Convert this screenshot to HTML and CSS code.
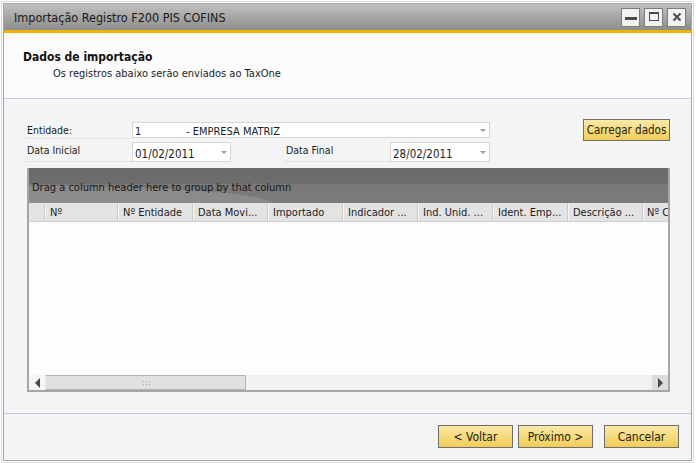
FILE: index.html
```html
<!DOCTYPE html>
<html>
    <head>
        <meta http-equiv='Content-Type' content='text/html; charset=UTF-8'>
        <title>Importação Registro F200 PIS COFINS</title>
        <link rel="stylesheet" href="styles.css">
    </head>
    <body>
        <div class='window'>
            <div class='titlebar'>
                <span class='title'>Importação Registro F200 PIS COFINS</span>
                <div class='winbtns'>
                    <span class='winbtn'><svg width='16' height='16' viewBox='0 0 16 16'><rect x='2' y='8' width='12' height='3' fill='#4a4a4a'/></svg></span>
                    <span class='winbtn'><svg width='16' height='16' viewBox='0 0 16 16'><rect x='3.5' y='3.5' width='9' height='8' fill='none' stroke='#4a4a4a' stroke-width='1'/><rect x='3' y='3' width='10' height='2' fill='#4a4a4a'/></svg></span>
                    <span class='winbtn'><svg width='16' height='16' viewBox='0 0 16 16'><path d='M4.5 4.5 L11.5 11.5 M11.5 4.5 L4.5 11.5' stroke='#4a4a4a' stroke-width='2'/></svg></span>
                </div>
            </div>
            <div class='accent'></div>
            <div class='header'>
                <div class='header-title'>Dados de importação</div>
                <div class='header-sub'>Os registros abaixo serão enviados ao TaxOne</div>
            </div>
            <div class='sep'></div>
            <div class='content'>
                <div class='form'>
                    <div class='fields'>
                        <div class='row row1'>
                            <div class='label'>Entidade:</div>
                            <div class='field combo'><span class='code'>1</span><span>- EMPRESA MATRIZ</span><i class='arrow'></i></div>
                        </div>
                        <div class='row row2'>
                            <div class='label'>Data Inicial</div>
                            <div class='field date'><span>01/02/2011</span><i class='arrow'></i></div>
                            <div class='label label-final'>Data Final</div>
                            <div class='field date date2'><span>28/02/2011</span><i class='arrow'></i></div>
                        </div>
                    </div>
                    <button class='btn btn-load'>Carregar dados</button>
                </div>
                <div class='grid'>
                    <div class='group'>Drag a column header here to group by that column</div>
                    <div class='cols'>
                        <div class='col col-ind'></div>
                        <div class='col col-first'>Nº</div>
                        <div class='col'>Nº Entidade</div>
                        <div class='col'>Data Movi...</div>
                        <div class='col'>Importado</div>
                        <div class='col'>Indicador ...</div>
                        <div class='col'>Ind. Unid. ...</div>
                        <div class='col'>Ident. Emp...</div>
                        <div class='col'>Descrição ...</div>
                        <div class='col col-last'>Nº C</div>
                    </div>
                    <div class='rows'></div>
                    <div class='hscroll'>
                        <div class='sbtn sbtn-left'><i class='tri-left'></i></div>
                        <div class='thumb'><i class='grip'></i></div>
                        <div class='track'></div>
                        <div class='sbtn sbtn-right'><i class='tri-right'></i></div>
                    </div>
                </div>
            </div>
            <div class='sep'></div>
            <div class='footer'>
                <button class='btn btn-nav'>&lt; Voltar</button>
                <button class='btn btn-nav'>Próximo &gt;</button>
                <button class='btn btn-nav btn-cancel'>Cancelar</button>
            </div>
        </div>
    </body>
</html>
```

FILE: styles.css
```css
html, body {
    margin: 0;
    padding: 0;
    background: #ffffff;
}
body {
    font-family: "DejaVu Sans Condensed", "DejaVu Sans", sans-serif;
    font-size: 11px;
    color: #1c1c1c;
}
.window {
    margin: 3px 4px 2px 3px;
    height: 456px;
    border: 1px solid #a6a6a6;
    outline: 1px solid #dcdcdc;
    outline-offset: 1px;
    background: #f4f4f4;
    display: flex;
    flex-direction: column;
}
.titlebar {
    height: 26px;
    background: linear-gradient(180deg, #c2c2c2 0%, #acacac 40%, #9a9a9a 75%, #8e8e8e 100%);
    display: flex;
    align-items: center;
    padding-left: 10px;
    padding-right: 5px;
}
.title {
    font-size: 12.5px;
    color: #1a1a1a;
    flex: 1;
}
.winbtns {
    display: flex;
    gap: 4px;
}
.winbtn {
    width: 17px;
    height: 17px;
    border: 1px solid #7c7c7c;
    background: #f2f2f2;
    display: flex;
    align-items: center;
    justify-content: center;
}
.accent {
    height: 3px;
    background: #f2b200;
}
.header {
    height: 65px;
    background: #fcfcfc;
    padding-left: 19px;
    box-sizing: border-box;
    padding-top: 17px;
}
.header-title {
    font-weight: bold;
    font-size: 12px;
    color: #111;
}
.header-sub {
    padding-left: 30px;
    margin-top: 3px;
}
.sep {
    height: 1px;
    background: #bccbe2;
}
.content {
    height: 314px;
    padding: 20px 21px 0 22px;
    box-sizing: border-box;
}
.form {
    display: flex;
    align-items: flex-start;
}
.fields {
    padding-top: 3px;
}
.row {
    display: flex;
}
.row1 {
    height: 17px;
}
.row2 {
    margin-top: 3px;
    height: 20px;
}
.label {
    width: 106px;
    box-sizing: border-box;
    padding: 2px 0 0 1px;
    border-bottom: 1px solid #e4e4e4;
    font-size: 10.5px;
}
.label-final {
    width: 107px;
    margin-left: 52px;
    padding-left: 3px;
}
.field {
    position: relative;
    background: #ffffff;
    border: 1px solid #d6d6d6;
    box-sizing: border-box;
    padding: 4px 0 0 2px;
}
.combo {
    width: 358px;
    height: 16px;
    padding-top: 2px;
}
.code {
    display: inline-block;
    width: 51px;
}
.date {
    width: 99px;
    height: 20px;
    font-size: 11.5px;
    padding-top: 4px;
}
.date2 {
    width: 100px;
}
.arrow {
    position: absolute;
    right: 3px;
    top: 50%;
    margin-top: -1px;
    border-left: 3px solid transparent;
    border-right: 3px solid transparent;
    border-top: 3px solid #9a9a9a;
}
.btn {
    font-family: "DejaVu Sans Condensed", "DejaVu Sans", sans-serif;
    font-size: 12px;
    color: #1c1c1c;
    border: 1px solid #6e6e6e;
    background: linear-gradient(180deg, #fbeaa8 0%, #f6dc80 45%, #f1cc58 100%);
    padding: 0;
    margin: 0;
}
.btn-load {
    margin-left: auto;
    width: 87px;
    height: 22px;
    font-size: 11.5px;
}
.grid {
    margin-top: 6px;
    margin-left: 1px;
    height: 224px;
    border: 2px solid #a6a6a6;
    border-top: 0;
    box-sizing: border-box;
    display: flex;
    flex-direction: column;
    overflow: hidden;
}
.group {
    height: 35px;
    box-sizing: border-box;
    padding: 13px 0 0 3px;
    color: #161616;
    background:
        radial-gradient(ellipse 340px 24px at 0 100%, #8e8e8e 0%, #8a8a8a 70%, rgba(138,138,138,0) 72%),
        linear-gradient(180deg, #686868 0%, #6e6e6e 45%, #797979 46%, #7b7b7b 100%);
}
.cols {
    height: 19px;
    display: flex;
    background: #e3e3e3;
    border-bottom: 1px solid #cfcfcf;
    box-sizing: border-box;
    white-space: nowrap;
}
.col {
    flex: none;
    width: 75px;
    box-sizing: border-box;
    border-left: 1px solid #f6f6f6;
    border-right: 1px solid #cbcbcb;
    padding: 3px 0 0 4px;
    overflow: hidden;
}
.col-ind {
    width: 16px;
    border-left: 0;
}
.col-first {
    width: 73px;
}
.col-last {
    width: 26px;
    border-right: 0;
    padding-left: 3px;
}
.rows {
    height: 153px;
    background: #fdfdfd;
}
.hscroll {
    height: 15px;
    display: flex;
    background: #f1f1f1;
}
.sbtn {
    width: 16px;
    display: flex;
    align-items: center;
    justify-content: center;
}
.sbtn-left {
    background: #f6f6f6;
}
.sbtn-right {
    background: #dcdcdc;
}
.tri-left {
    border-top: 5px solid transparent;
    border-bottom: 5px solid transparent;
    border-right: 5px solid #3e4c56;
}
.tri-right {
    border-top: 5px solid transparent;
    border-bottom: 5px solid transparent;
    border-left: 5px solid #3e4c56;
}
.thumb {
    width: 201px;
    box-sizing: border-box;
    background: #e0e0e0;
    border: 1px solid #b4b4b4;
    border-left-color: #ececec;
    display: flex;
    align-items: center;
    justify-content: center;
}
.grip {
    width: 8px;
    height: 5px;
    background-image: radial-gradient(circle, #9aa4ac 0.8px, transparent 1px);
    background-size: 3px 3px;
}
.track {
    flex: 1;
}
.footer {
    flex: 1;
    display: flex;
    justify-content: flex-end;
    align-items: flex-start;
    padding: 11px 12px 0 0;
    gap: 5px;
}
.btn-nav {
    width: 75px;
    height: 23px;
}
.btn-cancel {
    margin-left: 6px;
}
```
